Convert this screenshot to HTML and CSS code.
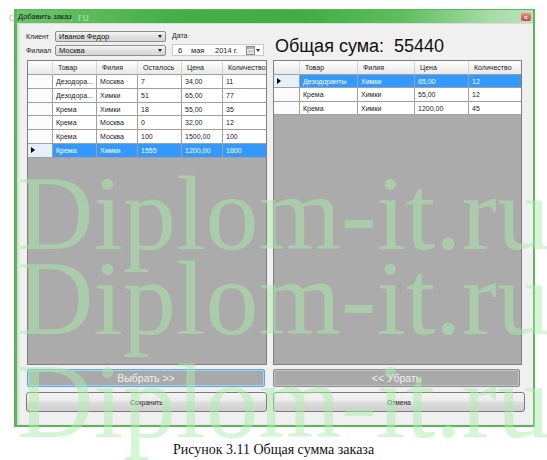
FILE: index.html
```html
<!DOCTYPE html>
<html>
<head>
<meta charset="utf-8">
<link rel="stylesheet" href="styles.css">
</head>
<body>
<div class="page">
  <div class="window">
    <div class="titlebar">
      <span class="title">Добавить заказ</span>
      <span class="close">x</span>
    </div>
    <div class="body">
      <div class="top-left">
        <span class="lbl lbl-client">Клиент</span>
        <div class="combo combo-client"><span>Иванов Федор</span><span class="arrow"></span></div>
        <span class="lbl lbl-date">Дата</span>
        <span class="lbl lbl-branch">Филиал</span>
        <div class="combo combo-branch"><span>Москва</span><span class="arrow"></span></div>
        <div class="date">
          <span class="d-day">6</span>
          <span class="d-month">мая</span>
          <span class="d-year">2014 г.</span>
          <svg class="cal" width="9" height="9" viewBox="0 0 9 9"><rect x="0.5" y="0.5" width="8" height="8" fill="#e8e8e8" stroke="#8a8a8a"/><rect x="1" y="1" width="7" height="2" fill="#9fb4cc"/><rect x="2" y="4" width="5" height="3" fill="#cfcfcf"/></svg>
          <span class="d-arrow"></span>
        </div>
      </div>
      <div class="top-right">Общая сума:&nbsp; 55440</div>

      <div class="dgrid dgrid-left">
        <div class="row head">
          <div class="c rh"></div><div class="c">Товар</div><div class="c">Филия</div><div class="c">Осталось</div><div class="c">Цена</div><div class="c">Количество</div>
        </div>
        <div class="row"><div class="c rh"></div><div class="c">Дезодора...</div><div class="c">Москва</div><div class="c">7</div><div class="c">34,00</div><div class="c">11</div></div>
        <div class="row"><div class="c rh"></div><div class="c">Дезодора...</div><div class="c">Химки</div><div class="c">51</div><div class="c">65,00</div><div class="c">77</div></div>
        <div class="row"><div class="c rh"></div><div class="c">Крема</div><div class="c">Химки</div><div class="c">18</div><div class="c">55,00</div><div class="c">35</div></div>
        <div class="row"><div class="c rh"></div><div class="c">Крема</div><div class="c">Москва</div><div class="c">0</div><div class="c">32,00</div><div class="c">12</div></div>
        <div class="row"><div class="c rh"></div><div class="c">Крема</div><div class="c">Москва</div><div class="c">100</div><div class="c">1500,00</div><div class="c">100</div></div>
        <div class="row sel"><div class="c rh"><span class="tri"></span></div><div class="c">Крема</div><div class="c">Химки</div><div class="c">1555</div><div class="c">1200,00</div><div class="c">1600</div></div>
      </div>

      <div class="dgrid dgrid-right">
        <div class="row head">
          <div class="c rh"></div><div class="c">Товар</div><div class="c">Филия</div><div class="c">Цена</div><div class="c">Количество</div>
        </div>
        <div class="row sel"><div class="c rh"><span class="tri"></span></div><div class="c">Дезодоранты</div><div class="c">Химки</div><div class="c">65,00</div><div class="c">12</div></div>
        <div class="row"><div class="c rh"></div><div class="c">Крема</div><div class="c">Химки</div><div class="c">55,00</div><div class="c">12</div></div>
        <div class="row"><div class="c rh"></div><div class="c">Крема</div><div class="c">Химки</div><div class="c">1200,00</div><div class="c">45</div></div>
      </div>

      <div class="btn big focus">Выбрать &gt;&gt;</div>
      <div class="btn big">&lt;&lt; Убрать</div>
      <div class="btn std save">Сохранить</div>
      <div class="btn std cancel">Отмена</div>
    </div>
  </div>
  <div class="caption">Рисунок 3.11 Общая сумма заказа</div>

  <div class="wm-small wm-c">с</div>
  <div class="wm-small wm-ru">. ru</div>
  <div class="wm wm1">Diplom-it.ru</div>
  <div class="wm wm2">Diplom-it.ru</div>
  <div class="wm wm3">Diplom-it.ru</div>
</div>
</body>
</html>
```

FILE: styles.css
```css
* { box-sizing: border-box; }
html, body { margin: 0; padding: 0; background: #fff; }
body { width: 547px; height: 460px; overflow: hidden; font-family: "Liberation Sans", Arial, sans-serif; }

.page {
  position: relative;
  width: 547px;
  height: 460px;
  padding: 9px 0 0 14px;
}

.window {
  width: 521px;
  height: 418px;
  border: 2px solid #5cb55c;
  border-left-width: 3px;
  border-top-width: 1px;
  background: #f0f0f0;
  display: flex;
  flex-direction: column;
  box-shadow: inset 2px 0 2px rgba(120, 200, 120, 0.35);
}

.titlebar {
  height: 13px;
  background: linear-gradient(90deg, #6cc56c 0%, #45b045 30%, #3fae3f 55%, #5fbf5f 75%, #a8dca8 92%, #b8e2b8 100%);
  display: flex;
  align-items: center;
  justify-content: space-between;
  padding: 0 2px 0 1px;
}
.title { font-size: 7.5px; color: #111; }
.close {
  width: 10px;
  height: 8px;
  border-radius: 2px;
  background: linear-gradient(#e89080, #c84a3a);
  color: #fff;
  font-size: 6px;
  line-height: 8px;
  text-align: center;
  font-weight: bold;
}

.body {
  flex: 1;
  display: grid;
  grid-template-columns: 241px 250px;
  grid-template-rows: 33px 305px 18px 20px;
  column-gap: 5px;
  padding: 3px 0 0 9px;
  border-top: 1px solid #dcdcdc;
}

.top-left {
  display: grid;
  grid-template-columns: 29px 111px 6px 92px;
  grid-template-rows: 11px 11px;
  row-gap: 3px;
  padding-top: 4px;
  font-size: 7px;
  color: #222;
}
.lbl { line-height: 11px; }
.lbl-client { grid-column: 1; grid-row: 1; }
.combo-client { grid-column: 2; grid-row: 1; }
.lbl-date { grid-column: 4; grid-row: 1; padding-left: 0; line-height: 10px; }
.lbl-branch { grid-column: 1; grid-row: 2; }
.combo-branch { grid-column: 2; grid-row: 2; }
.date { grid-column: 4; grid-row: 2; }

.combo {
  border: 1px solid #8e8f8f;
  border-radius: 2px;
  background: linear-gradient(#f6f6f6, #e0e0e0 50%, #d6d6d6);
  display: flex;
  align-items: center;
  justify-content: space-between;
  padding: 0 3px 0 3px;
  font-size: 7.5px;
  color: #111;
}
.arrow {
  width: 0;
  height: 0;
  border-left: 2.5px solid transparent;
  border-right: 2.5px solid transparent;
  border-top: 3px solid #222;
}

.date {
  background: #fff;
  border: 1px solid #c8cacd;
  display: flex;
  align-items: center;
  padding-left: 5px;
  font-size: 7.5px;
  color: #222;
  margin-top: -1px;
  height: 12px;
}
.d-day { width: 13px; }
.d-month { width: 24px; }
.d-year { width: 31px; }
.cal { margin-right: 1px; }
.d-arrow {
  width: 0;
  height: 0;
  border-left: 2px solid transparent;
  border-right: 2px solid transparent;
  border-top: 3px solid #333;
}

.top-right {
  font-family: "Liberation Sans", Arial, sans-serif;
  font-size: 18px;
  line-height: 20px;
  color: #111;
  padding: 9px 0 0 3px;
  white-space: nowrap;
}

.dgrid {
  border: 1px solid #7f7f7f;
  background: #ababab;
  overflow: hidden;
  font-size: 7px;
  color: #222;
}
.dgrid-left { margin-left: 1px; }
.dgrid-right { margin-left: 1px; }
.row { display: grid; height: 13.8px; }
.dgrid-left .row { grid-template-columns: 25px 44px 41px 44px 41px 46px; }
.dgrid-right .row { grid-template-columns: 26px 58px 57px 54px 54px; height: 13.3px; }
.row.head { height: 14px; }
.c {
  background: #fff;
  border-right: 1px solid #a0a0a0;
  border-bottom: 1px solid #a0a0a0;
  padding-left: 3px;
  line-height: 13px;
  white-space: nowrap;
  overflow: hidden;
}
.head .c {
  background: linear-gradient(#ffffff, #f3f3f3 50%, #e9e9e9);
  border-right: 1px solid #d5d5d5;
  border-bottom: 1px solid #a0a0a0;
  padding-left: 5px;
}
.rh { background: #fbfbfb; position: relative; }
.sel .c { background: #3399ff; color: #fff; }
.sel .c.rh { background: #e6f0fb; }
.tri {
  position: absolute;
  left: 3px;
  top: 3px;
  width: 0;
  height: 0;
  border-top: 3px solid transparent;
  border-bottom: 3px solid transparent;
  border-left: 4px solid #000;
}

.btn {
  display: flex;
  align-items: center;
  justify-content: center;
  color: #fff;
}
.btn.big {
  margin: 4px 2px -4px 1px;
  background: #a9a9a9;
  border: 1px solid #8c8c8c;
  border-radius: 2px;
  box-shadow: inset 0 0 0 1px #c4c4c4;
  font-size: 10.5px;
  color: #f2f2f2;
}
.btn.big.focus {
  border-color: #5aa8e0;
  box-shadow: inset 0 0 0 1px #a8d4f4;
}
.btn.std {
  margin: 9px 0 -9px 0;
  border: 1px solid #7a7a7a;
  border-radius: 3px;
  background: linear-gradient(#f4f4f4, #ebebeb 45%, #dddddd 50%, #d0d0d0);
  font-size: 6.5px;
  color: #222;
}
.btn.std.cancel { margin-right: -3px; margin-left: 1px; }

.caption {
  margin: 15px 0 0 -14px;
  text-align: center;
  font-family: "Liberation Serif", "Times New Roman", serif;
  font-size: 14px;
  line-height: 16px;
  color: #111;
}

.wm {
  position: absolute;
  left: 17px;
  font-family: "Liberation Serif", "Times New Roman", serif;
  font-size: 106px;
  line-height: 106px;
  white-space: nowrap;
  color: rgb(170, 238, 170);
  opacity: 0.5;
  pointer-events: none;
}
.wm1 { top: 161px; }
.wm2 { top: 246px; }
.wm3 { top: 349px; }

.wm-small {
  position: absolute;
  font-family: "Liberation Sans", Arial, sans-serif;
  font-size: 11px;
  line-height: 12px;
  top: 11px;
}
.wm-c { left: 9px; color: #e8b0b0; }
.wm-ru { left: 70px; color: #a8e0a8; letter-spacing: 1px; }
```
